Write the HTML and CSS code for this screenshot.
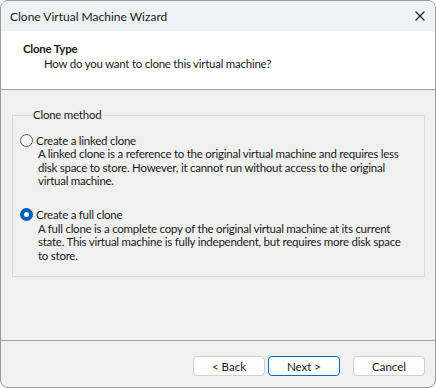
FILE: index.html
```html
<!DOCTYPE html>
<html lang="en">
  <head>
    <meta charset="UTF-8" />
    <title>Clone Virtual Machine Wizard</title>
    <link rel="stylesheet" href="styles.css">
  </head>
  <body>
    <div class="window">
      <div class="titlebar">
        <span class="title">Clone Virtual Machine Wizard</span>
        <svg class="close" width="10" height="10" viewBox="0 0 10 10">
          <path d="M0.5 0.5 L9.5 9.5 M9.5 0.5 L0.5 9.5" stroke="#1a1a1a" stroke-width="1.1" />
        </svg>
      </div>

      <div class="header">
        <h1>Clone Type</h1>
        <p>How do you want to clone this virtual machine?</p>
      </div>

      <div class="content">
        <fieldset class="group">
          <legend>Clone method</legend>

          <label class="option">
            <span class="radio"></span>
            <span class="option-label">Create a linked clone</span>
          </label>
          <p class="desc">A linked clone is a reference to the original virtual machine and requires less disk space to store. However, it cannot run without access to the original virtual machine.</p>

          <label class="option">
            <span class="radio checked"></span>
            <span class="option-label">Create a full clone</span>
          </label>
          <p class="desc">A full clone is a complete copy of the original virtual machine at its current state. This virtual machine is fully independent, but requires more disk space to store.</p>
        </fieldset>
      </div>

      <div class="footer">
        <button class="button" type="button">&lt; Back</button>
        <button class="button primary" type="button">Next &gt;</button>
        <button class="button cancel" type="button">Cancel</button>
      </div>
    </div>
  </body>
</html>
```

FILE: styles.css
```css
* {
  margin: 0;
  padding: 0;
  box-sizing: border-box;
}

body {
  background-color: #ffffff;
  font-family: Lato, "Noto Sans", sans-serif;
  font-size: 11.5px;
  letter-spacing: -0.25px;
  color: #1a1a1a;
}

.window {
  width: 436px;
  height: 388px;
  display: flex;
  flex-direction: column;
  border: 1px solid #9a9a9a;
  border-radius: 8px;
  overflow: hidden;
  background-color: #f0f0f0;
}

.titlebar {
  height: 30px;
  display: flex;
  align-items: center;
  justify-content: space-between;
  padding: 0 10px 0 9px;
  background-color: #eef1f6;
}

.title {
  font-size: 12px;
  letter-spacing: 0;
  color: #1a1a1a;
}

.close {
  display: block;
}

.header {
  height: 59px;
  background-color: #ffffff;
  border-bottom: 1px solid #a0a0a0;
  padding: 10px 0 0 22px;
}

.header h1 {
  font-size: 11.5px;
  font-weight: bold;
  line-height: 16px;
}

.header p {
  padding-left: 21px;
  line-height: 14px;
}

.content {
  flex: 1;
  padding: 18px 10px 0 11px;
  border-bottom: 1px solid #a0a0a0;
}

.group {
  border: 1px solid #dadada;
  padding: 10px 8px 16px 7px;
  height: 169px;
}

.group legend {
  padding: 0 1px;
  margin-left: 12px;
  line-height: 14px;
}

.option {
  display: flex;
  align-items: center;
  gap: 3px;
  height: 16px;
}

.radio {
  width: 13px;
  height: 13px;
  border-radius: 50%;
  border: 1px solid #5a5a5a;
  background-color: #f7f7f7;
}

.radio.checked {
  border: 4px solid #005fb8;
  background-color: #ffffff;
}

.desc {
  width: 390px;
  padding-left: 18px;
  line-height: 13.5px;
  margin-top: -1px;
  margin-bottom: 19px;
}

.footer {
  height: 46px;
  display: flex;
  justify-content: flex-end;
  align-items: flex-start;
  padding: 15px 10px 0 0;
  gap: 3px;
}

.button {
  width: 72px;
  height: 20px;
  font-family: inherit;
  font-size: 11.5px;
  color: #1a1a1a;
  background-color: #fdfdfd;
  border: 1px solid #d0d0d0;
  border-radius: 4px;
}

.button.primary {
  border: 1px solid #0067c0;
}

.button.cancel {
  margin-left: 10px;
}
```
